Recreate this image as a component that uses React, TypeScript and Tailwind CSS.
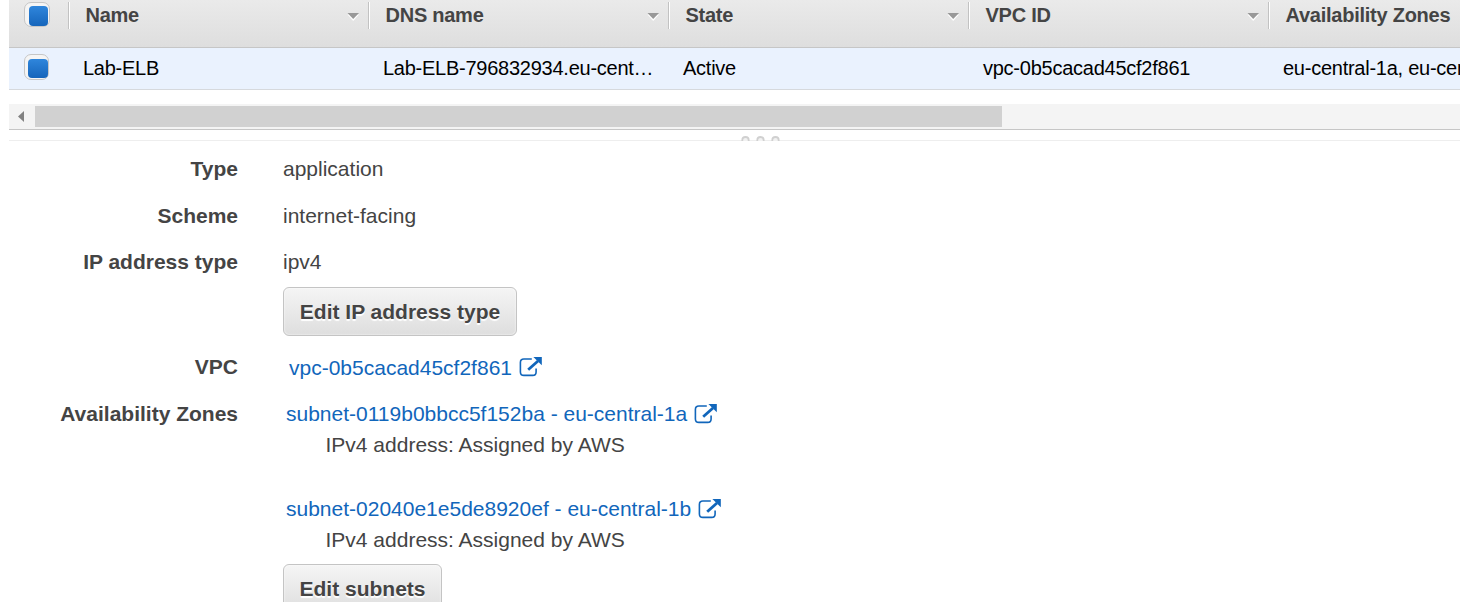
import React from "react";

const columns = [
  { title: "Name", value: "Lab-ELB" },
  { title: "DNS name", value: "Lab-ELB-796832934.eu-cent…" },
  { title: "State", value: "Active" },
  { title: "VPC ID", value: "vpc-0b5cacad45cf2f861" },
  { title: "Availability Zones", value: "eu-central-1a, eu-cen" },
];

function Checkbox({ header = false }: { header?: boolean }) {
  return (
    <span
      className={
        header
          ? "block h-[25px] w-[26px] rounded-[7px] border border-[#c6c6c6] bg-[#f5f5f5] pt-[3px] pl-1"
          : "block h-[26px] w-[25px] rounded-[7px] border border-[#c6c6c6] bg-[#f5f5f5] pt-1 pl-[3px]"
      }
    >
      <span
        className={
          header
            ? "block h-5 w-[19px] rounded-[4px] bg-linear-to-b from-[#2f86dc] to-[#1565bb]"
            : "block h-[19px] w-5 rounded-[4px] bg-linear-to-b from-[#2f86dc] to-[#1565bb]"
        }
      />
    </span>
  );
}

function SortArrow() {
  return (
    <svg className="mt-[11px] mr-[9px] h-[8px] w-[12px] shrink-0" viewBox="0 0 12 8">
      <path d="M0.5 1.5h11.5L6.2 8z" fill="#fff" />
      <path d="M0.5 0h11.5L6.2 6z" fill="#999" />
    </svg>
  );
}

function ExternalIcon() {
  return (
    <svg className="h-[20px] w-[23px] shrink-0" viewBox="0 0 23 20" fill="none" stroke="#1166bb">
      <path d="M12.8 2H4.9Q1.4 2 1.4 5.4v9.6Q1.4 18.4 4.9 18.4h8.8Q17.1 18.4 17.1 15V11.5" strokeWidth="1.6" />
      <path d="M9.2 12.8L19 4" strokeWidth="2.8" />
      <path d="M14.4 0H22.8V8.2z" fill="#1166bb" stroke="none" />
    </svg>
  );
}

function Button({ children, className }: { children: React.ReactNode; className: string }) {
  return (
    <button
      className={
        "block rounded-[6px] border border-[#c4c4c4] bg-linear-to-b from-[#f5f5f5] to-[#dedede] text-center font-bold whitespace-nowrap text-[#444] inset-shadow-[0_0_2px_#fff] [text-shadow:0_2px_1px_#fff] " +
        className
      }
    >
      {children}
    </button>
  );
}

function Field({ label, className, children }: { label: string; className: string; children: React.ReactNode }) {
  return (
    <div className={"flex " + className}>
      <div className="w-[238px] shrink-0 text-right font-bold">{label}</div>
      <div className="pl-[45px]">{children}</div>
    </div>
  );
}

function Subnet({ name }: { name: string }) {
  return (
    <div className="h-[95px]">
      <a className="flex h-[31px] gap-[7px] pl-[3px] text-[#1166bb]">
        {name}
        <span className="pt-[5px]">
          <ExternalIcon />
        </span>
      </a>
      <div className="pl-[42.5px]">IPv4 address: Assigned by AWS</div>
    </div>
  );
}

export default function App() {
  return (
    <div className="h-[602px] w-[1460px] overflow-hidden bg-white font-['Liberation_Sans',Arial,sans-serif] text-[20px]">
      <div className="ml-[9px] tracking-[-0.25px]">
        <div className="flex h-12 overflow-hidden border-b border-[#c6c6c6] bg-linear-to-b from-[#eaeaea] to-[#dedede] pt-[2px]">
          <div className="w-[59px] shrink-0 pl-[15px]">
            <Checkbox header />
          </div>
          {columns.map((c, i) => (
            <div
              key={c.title}
              className="flex h-[27px] w-[300px] shrink-0 justify-between border-l border-[#c2c2c2] pl-[16.5px] text-[#444] inset-shadow-[1px_0_0_#fff]"
            >
              <span className="leading-[27px] font-bold whitespace-nowrap">{c.title}</span>
              {i < 4 && <SortArrow />}
            </div>
          ))}
        </div>
        <div className="flex h-[42px] overflow-hidden border-b border-[#d6d9dd] bg-[#eaf2fe]">
          <div className="w-[59px] shrink-0 pt-[6px] pl-[15px]">
            <Checkbox />
          </div>
          {columns.map((c) => (
            <div key={c.title} className="w-[300px] shrink-0 pl-[15px] leading-[41px] whitespace-nowrap text-black">
              {c.value}
            </div>
          ))}
        </div>
        <div className="mt-[14px] flex h-[26px] items-center border-b border-[#c6c6c6] bg-[#f4f4f4]">
          <div className="flex w-[26px] shrink-0 justify-start pl-[9px]">
            <svg className="h-[11px] w-[6px]" viewBox="0 0 6 11">
              <path d="M6 0v11L0 5.5z" fill="#828282" />
            </svg>
          </div>
          <div className="h-[21px] w-[967px] bg-[#d1d1d1]" />
        </div>
        <div className="flex h-[11px] items-end justify-center border-b border-[#eee]">
          <svg
            className="-mb-px ml-[53px] h-[5px] w-[40px]"
            viewBox="0 0 40 5"
            fill="#f2f2f2"
            stroke="#d0d0d0"
            strokeWidth="1.8"
          >
            <circle cx="4.5" cy="4.2" r="3.2" />
            <circle cx="19.5" cy="4.2" r="3.2" />
            <circle cx="34.5" cy="4.2" r="3.2" />
          </svg>
        </div>
      </div>

      <div className="pt-[13px] text-[21px] leading-[30px] text-[#444]">
        <Field label="Type" className="h-[47px]">application</Field>
        <Field label="Scheme" className="h-[46px]">internet-facing</Field>
        <Field label="IP address type" className="h-[105px]">
          ipv4
          <Button className="mt-[10px] h-[49px] w-[234px] pt-px leading-[46px]">Edit IP address type</Button>
        </Field>
        <Field label="VPC" className="h-[47px]">
          <a className="flex gap-[7px] pt-px pl-[6px] text-[#1166bb]">
            vpc-0b5cacad45cf2f861
            <span className="pt-[4px]">
              <ExternalIcon />
            </span>
          </a>
        </Field>
        <Field label="Availability Zones" className="h-[203px]">
          <Subnet name="subnet-0119b0bbcc5f152ba - eu-central-1a" />
          <Subnet name="subnet-02040e1e5de8920ef - eu-central-1b" />
          <Button className="-mt-[25px] h-[49px] w-[159px] pt-px leading-[46px]">Edit subnets</Button>
        </Field>
      </div>
    </div>
  );
}
